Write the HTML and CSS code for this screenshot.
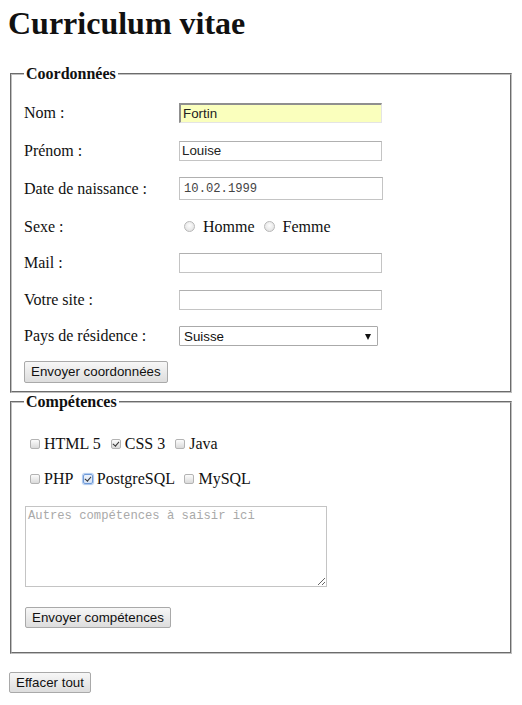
FILE: index.html
```html
<!DOCTYPE html>
<html lang="fr">
<head>
    <meta charset="UTF-8">
    <meta name="viewport" content="width=device-width, initial-scale=1.0">
    <title>Curriculum vitae</title>
    <link rel="stylesheet" href="styles.css">
</head>
<body>
    <h1>Curriculum vitae</h1>
    <form id="cvForm">
        <fieldset class="coords">
            <legend>Coordonnées</legend>
            <div class="row wide">
                <label for="nom">Nom :</label>
                <input type="text" id="nom" class="field autofill" value="Fortin">
            </div>
            <div class="row wide">
                <label for="prenom">Prénom :</label>
                <input type="text" id="prenom" class="field" value="Louise">
            </div>
            <div class="row wide">
                <label for="naissance">Date de naissance :</label>
                <input type="text" id="naissance" class="field date" value="10.02.1999">
            </div>
            <div class="row">
                <label>Sexe :</label>
                <span class="choices"><input type="radio" name="sexe" id="homme"> <label for="homme">Homme</label> <input type="radio" name="sexe" id="femme"> <label for="femme">Femme</label></span>
            </div>
            <div class="row">
                <label for="mail">Mail :</label>
                <input type="email" id="mail" class="field">
            </div>
            <div class="row">
                <label for="site">Votre site :</label>
                <input type="url" id="site" class="field">
            </div>
            <div class="row">
                <label for="pays">Pays de résidence :</label>
                <span class="select-wrap">
                    <select id="pays">
                        <option>Suisse</option>
                        <option>France</option>
                        <option>Belgique</option>
                        <option>Canada</option>
                    </select>
                </span>
            </div>
            <div class="row actions">
                <button type="button" class="btn">Envoyer coordonnées</button>
            </div>
        </fieldset>

        <fieldset class="skills">
            <legend>Compétences</legend>
            <div class="checks"><input type="checkbox" id="html5"> <label for="html5">HTML 5</label> <input type="checkbox" id="css3" checked> <label for="css3">CSS 3</label> <input type="checkbox" id="java"> <label for="java">Java</label></div>
            <div class="checks last"><input type="checkbox" id="php"> <label for="php">PHP</label> <input type="checkbox" id="pgsql" class="focused" checked> <label for="pgsql">PostgreSQL</label> <input type="checkbox" id="mysql"> <label for="mysql">MySQL</label></div>
            <textarea id="autres" placeholder="Autres compétences à saisir ici"></textarea>
            <div class="actions">
                <button type="button" class="btn">Envoyer compétences</button>
            </div>
        </fieldset>

        <div class="reset-row">
            <button type="reset" class="btn">Effacer tout</button>
        </div>
    </form>
</body>
</html>
```

FILE: styles.css
```css
body {
    margin: 5px 8px 8px;
    font-family: "Liberation Serif", "Times New Roman", serif;
    font-size: 16px;
    color: #111;
    background: #fff;
}

h1 {
    font-size: 32px;
    margin: 0 0 22.5px;
}

fieldset {
    margin: 0 2px;
    border: 2px groove #c0c0c0;
    padding: 18px 12px 8px;
}

legend {
    font-weight: bold;
    padding: 0 2px;
}

.row {
    display: flex;
    align-items: center;
    height: 24px;
    margin-bottom: 12.5px;
}

.row.wide {
    margin-bottom: 14px;
}

.row > label {
    width: 155px;
    flex-shrink: 0;
}

.row.actions {
    height: 22px;
    margin-bottom: 0;
}

.field {
    box-sizing: border-box;
    width: 203px;
    height: 20px;
    padding: 0 2px;
    border: 1px solid #c4c4c4;
    border-top-color: #b0b0b0;
    font-family: "Liberation Sans", Arial, sans-serif;
    font-size: 13.33px;
    color: #222;
    background: #fff;
    outline: none;
}

.autofill {
    background: #faffbd;
    border-width: 2px 1px 1px 2px;
    border-color: #8f8f8f #e4e4e4 #e4e4e4 #8f8f8f;
}

.date {
    width: 204px;
    height: 23px;
    padding-left: 4px;
    font-family: "Liberation Mono", "Courier New", monospace;
    font-size: 12.2px;
    color: #444;
}

.choices input[type="radio"] {
    appearance: none;
    width: 11px;
    height: 11px;
    margin: 0 4px 0 5px;
    border: 1px solid #b8b8b8;
    border-radius: 50%;
    background: radial-gradient(circle at 50% 40%, #fdfdfd, #dcdcdc);
    vertical-align: baseline;
}

.select-wrap {
    position: relative;
    display: inline-block;
}

.select-wrap::after {
    content: "";
    position: absolute;
    right: 7px;
    top: 8px;
    border-left: 3.5px solid transparent;
    border-right: 3.5px solid transparent;
    border-top: 6px solid #111;
    pointer-events: none;
}

select {
    appearance: none;
    box-sizing: border-box;
    width: 199px;
    height: 20px;
    padding: 0 4px;
    border: 1px solid #aaa;
    border-radius: 1px;
    background: #fff;
    font-family: "Liberation Sans", Arial, sans-serif;
    font-size: 13.33px;
    color: #111;
}

.btn {
    box-sizing: border-box;
    height: 22px;
    padding: 0 6px;
    border: 1px solid #a9a9a9;
    border-radius: 2px;
    background: linear-gradient(#f7f7f7, #dddddd);
    font-family: "Liberation Sans", Arial, sans-serif;
    font-size: 13.33px;
    color: #111;
    cursor: pointer;
}

.skills {
    padding: 23px 12px 25px;
}

.checks {
    height: 20px;
    line-height: 20px;
    margin-bottom: 15.5px;
}

.checks.last {
    margin-bottom: 16.5px;
}

.checks input[type="checkbox"] {
    appearance: none;
    position: relative;
    width: 10px;
    height: 10px;
    margin: 0 0 0 6px;
    border: 1px solid #b3b3b3;
    border-radius: 2px;
    background: linear-gradient(#fcfcfc, #dadada);
    vertical-align: baseline;
}

.checks input[type="checkbox"]:checked::after {
    content: "";
    position: absolute;
    left: 2.5px;
    top: 0;
    width: 2.5px;
    height: 5px;
    border: solid #333;
    border-width: 0 1.5px 1.5px 0;
    transform: rotate(40deg);
}

.checks input.focused {
    border-color: #6f9ad8;
    box-shadow: 0 0 1px 1px #a9c6ee;
    background: linear-gradient(#eef4fc, #d6e3f6);
}

textarea {
    display: block;
    box-sizing: border-box;
    width: 302px;
    height: 81px;
    margin: 0 0 20px 1px;
    padding: 2px;
    border: 1px solid #c4c4c4;
    font-family: "Liberation Mono", "Courier New", monospace;
    font-size: 12.2px;
}

textarea::placeholder {
    color: #a9a9a9;
}

.skills .actions {
    height: 20px;
}

.skills .actions .btn {
    height: 21px;
    margin-left: 1px;
}

.reset-row {
    margin-top: 18px;
}

.reset-row .btn {
    margin-left: 1px;
    height: 21px;
}
```
